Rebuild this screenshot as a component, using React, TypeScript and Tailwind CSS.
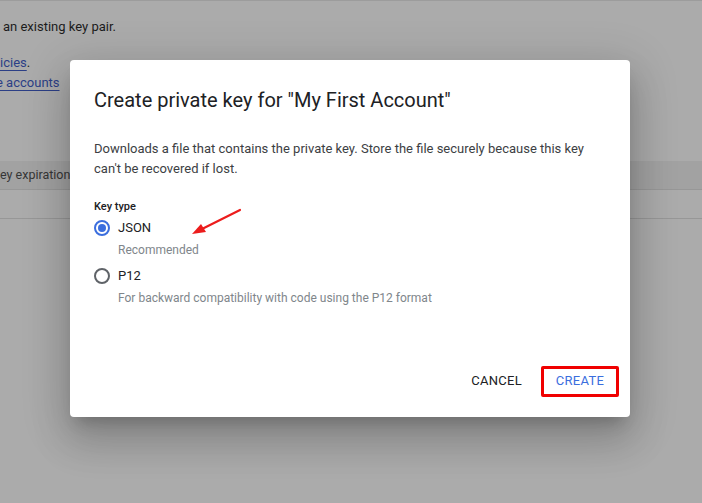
import React from "react";

export default function App() {
  return (
    <div
      className="relative w-[702px] h-[503px] overflow-hidden bg-[#ababab] border-t border-[#9c9c9c]"
      style={{ fontFamily: "Roboto, 'Liberation Sans', sans-serif" }}
    >
      {/* background page (dimmed) */}
      <div className="flex flex-col text-[13px] text-[#1c1c1c]">
        <div className="pl-[3px] pt-[16px] leading-[20px]">an existing key pair.</div>
        <div className="mt-[16px] leading-[20px]">
          <span className="underline text-[#2c3f86] decoration-[#2c3f86] underline-offset-[3px]">icies</span>.
        </div>
        <div className="leading-[20px] ml-[-4px]">
          <span className="underline text-[#2c3f86] decoration-[#2c3f86] underline-offset-[3px]">e accounts</span>
        </div>
        <div className="mt-[68px] h-[29px] bg-[#a2a2a2] border-b border-[#979797] flex items-center text-[12.5px] text-[#363636]">
          ey expiration date
        </div>
        <div className="h-[29px] border-b border-[#979797]" />
      </div>

      {/* dialog */}
      <div className="absolute left-[70px] top-[59px] w-[560px] h-[357px] bg-white rounded-[4px] flex flex-col shadow-[0_11px_15px_-7px_rgba(0,0,0,0.2),0_24px_38px_3px_rgba(0,0,0,0.14),0_9px_46px_8px_rgba(0,0,0,0.12)]">
        <div className="px-[24px] pt-[24px] text-[20px] leading-[32px] text-[#202124]">
          Create private key for "My First Account"
        </div>
        <div className="px-[24px] mt-[23px] text-[13px] leading-[20px] text-[#3c4043]">
          Downloads a file that contains the private key. Store the file securely because this key
          <br />
          can't be recovered if lost.
        </div>
        <div className="px-[24px] mt-[20px] text-[11px] leading-[16px] font-medium text-[#202124]">Key type</div>
        <div className="px-[24px] mt-[3px] flex items-center gap-[8px] h-[20px]">
          <span className="w-[16px] h-[16px] rounded-full border-2 border-[#3b6ede] flex items-center justify-center">
            <span className="w-[8px] h-[8px] rounded-full bg-[#3b6ede]" />
          </span>
          <span className="text-[13px] text-[#202124]">JSON</span>
        </div>
        <div className="pl-[48px] mt-[4px] text-[12px] leading-[16px] text-[#80868b]">Recommended</div>
        <div className="px-[24px] mt-[8px] flex items-center gap-[8px] h-[20px]">
          <span className="w-[16px] h-[16px] rounded-full border-2 border-[#5f6368]" />
          <span className="text-[13px] text-[#202124]">P12</span>
        </div>
        <div className="pl-[48px] mt-[4px] text-[12px] leading-[16px] text-[#80868b]">
          For backward compatibility with code using the P12 format
        </div>
        <div className="mt-auto flex justify-end items-center gap-[3px] pr-[11px] pb-[18px]">
          <button className="h-[36px] px-[16px] text-[13px] font-normal tracking-[0.3px] text-[#202124]">CANCEL</button>
          <button className="h-[31px] w-[78px] border-[3px] border-[#f00000] rounded-[2px] text-[13px] font-normal tracking-[0.3px] text-[#3b6ede]">
            CREATE
          </button>
        </div>
      </div>

      {/* red annotation arrow */}
      <svg className="absolute left-0 top-0" width="702" height="503" viewBox="0 0 702 503">
        <line x1="240" y1="209" x2="202" y2="228" stroke="#ec1c1c" strokeWidth="2.2" strokeLinecap="round" />
        <polygon points="192,233 201,223 206,231" fill="#ec1c1c" />
      </svg>
    </div>
  );
}
